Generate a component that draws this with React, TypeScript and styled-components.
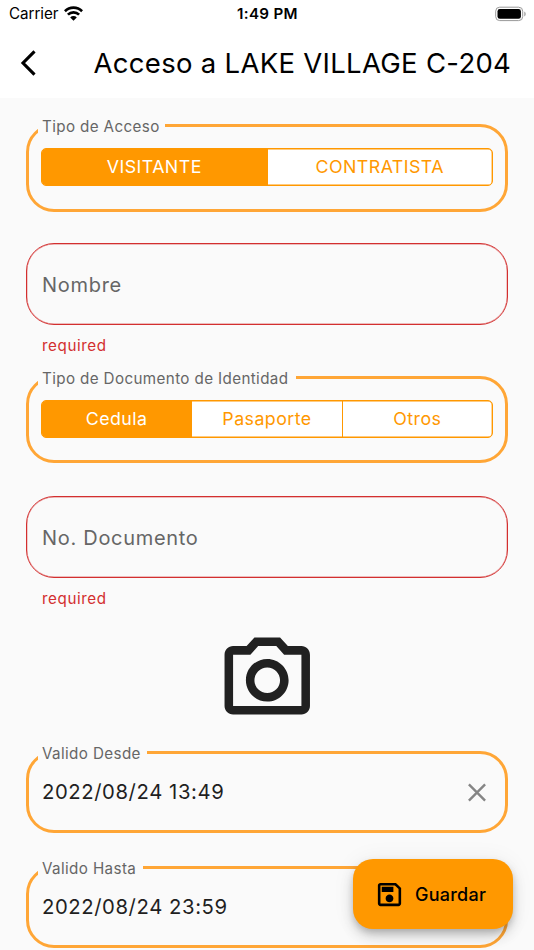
import React from "react";
import styled, { createGlobalStyle } from "styled-components";

const Global = createGlobalStyle`
  * { box-sizing: border-box; }
  html, body { margin: 0; height: 950px; overflow: hidden; background: #fafafa; }
  body { font-family: Inter, "Liberation Sans", sans-serif; color: #1f1f1f; }
`;

const Screen = styled.div`
  position: relative;
  width: 534px;
  height: 950px;
  overflow: hidden;
  background: #fafafa;
`;

const Header = styled.header`
  height: 98px;
  background: #fff;
  color: #000;
`;

const StatusBar = styled.div`
  display: grid;
  grid-template-columns: 1fr auto 1fr;
  align-items: center;
  height: 28px;
  padding: 0 8px 0 9px;
`;

const Carrier = styled.div`
  display: flex;
  align-items: center;
  gap: 6px;
  font-size: 15.2px;
  line-height: 20px;
  letter-spacing: -0.05px;
`;

const Clock = styled.div`
  font-size: 15.2px;
  line-height: 20px;
  font-weight: 600;
  letter-spacing: 0.3px;
`;

const Wifi = styled.svg`
  display: block;
  margin-bottom: 2px;
`;

const Battery = styled.svg`
  justify-self: end;
  display: block;
  margin-bottom: 1px;
`;

const TitleBar = styled.div`
  display: flex;
  align-items: center;
  height: 69px;
  padding-left: 20px;
`;

const Title = styled.h1`
  margin: 0 0 0 56.5px;
  font-size: 27.5px;
  line-height: 36px;
  font-weight: 400;
  letter-spacing: 0.3px;
  white-space: nowrap;
`;

const Form = styled.main`
  display: flex;
  flex-direction: column;
  padding: 26px 26px 0;
`;

const Field = styled.section<{ $height: number; $after: number; $error?: boolean }>`
  position: relative;
  flex: none;
  display: flex;
  align-items: center;
  height: ${(p) => p.$height}px;
  margin-bottom: ${(p) => p.$after}px;
  padding: 0 ${(p) => (p.$error ? 15 : 12)}px;
  border: ${(p) => (p.$error ? "1px solid #d32f2f" : "3px solid #ffa636")};
  border-radius: 28px;
  box-shadow: ${(p) => (p.$error ? "inset 0 0 0 0.4px rgba(211, 47, 47, 0.6)" : "none")};
`;

const Legend = styled.span<{ $width: number }>`
  position: absolute;
  top: -9px;
  left: 9px;
  width: ${(p) => p.$width}px;
  padding-left: 4px;
  background: #fafafa;
  color: #666;
  font-size: 15.2px;
  line-height: 18px;
  letter-spacing: 0.38px;
  white-space: nowrap;
`;

const Placeholder = styled.span`
  padding-top: 1px;
  color: #666;
  font-size: 20px;
  line-height: 26px;
  letter-spacing: 0.7px;
`;

const ErrorText = styled.p<{ $after: number }>`
  margin: 0 0 ${(p) => p.$after}px 16px;
  color: #d32f2f;
  font-size: 15.2px;
  line-height: 20px;
  letter-spacing: 0.6px;
`;

const Segments = styled.div`
  display: flex;
  flex: 1;
  height: 38px;
  margin-bottom: 2px;
  overflow: hidden;
  border: 1px solid #ff9800;
  border-radius: 5px;
  background: #fff;
  box-shadow: inset 0 0 0 0.4px #ff9800;
`;

const Segment = styled.button<{ $active?: boolean }>`
  flex: 1 1 0;
  padding: 0;
  border: 0;
  background: ${(p) => (p.$active ? "#ff9800" : "transparent")};
  color: ${(p) => (p.$active ? "#fff" : "#ff9800")};
  font: 400 17.8px/34px Inter, "Liberation Sans", sans-serif;
  letter-spacing: 0.45px;
  & + & { border-left: 1px solid #ff9800; }
`;

const DateValue = styled.span`
  flex: 1;
  padding-left: 1px;
  font-size: 20.3px;
  line-height: 26px;
  letter-spacing: 0.58px;
`;

const ClearButton = styled.button`
  display: flex;
  margin-right: 4px;
  padding: 0;
  border: 0;
  background: none;
`;

const CameraRow = styled.div`
  display: flex;
  justify-content: center;
  height: 103px;
  margin-bottom: 19px;
`;

const SaveButton = styled.button`
  position: absolute;
  left: 353px;
  top: 859px;
  display: flex;
  align-items: center;
  width: 160px;
  height: 70px;
  padding: 0 0 0 21px;
  gap: 10px;
  border: 0;
  border-radius: 20px;
  background: #ff9800;
  color: #000;
  font: 500 18px/24px Inter, "Liberation Sans", sans-serif;
  letter-spacing: 0.25px;
  box-shadow: 0 4px 7px -1px rgba(0, 0, 0, 0.2), 0 8px 14px rgba(0, 0, 0, 0.14), 0 1px 24px rgba(0, 0, 0, 0.06);
`;

const SaveLabel = styled.span`
  padding-top: 1px;
`;

const ClearIcon = () => (
  <ClearButton aria-label="Clear">
    <svg width="24" height="24" viewBox="0 0 24 24" fill="none" stroke="#858585" strokeWidth="2.4">
      <path d="M3.9 4.4 20.1 20.6M20.1 4.4 3.9 20.6" />
    </svg>
  </ClearButton>
);

export default function App() {
  return (
    <Screen>
      <Global />
      <Header>
        <StatusBar>
          <Carrier>
            <span>Carrier</span>
            <Wifi width="19" height="15" viewBox="0 0 19 15" fill="none" stroke="#000" strokeWidth="2.7">
              <path d="M.9 5.2a12.3 12.3 0 0 1 17.2 0M3.9 8.6a8 8 0 0 1 11.2 0" />
              <path d="M6.2 11.4a4.7 4.7 0 0 1 6.6 0L9.5 14.8Z" fill="#000" stroke="none" />
            </Wifi>
          </Carrier>
          <Clock>1:49 PM</Clock>
          <Battery width="31" height="16" viewBox="0 0 31 16">
            <rect x=".7" y="1.2" width="27" height="13.4" rx="4" fill="none" stroke="#999" />
            <rect x="2.5" y="3" width="23.4" height="9.8" rx="2.4" fill="#000" />
            <path d="M29.3 5.6c1.8.8 1.8 4 0 4.8Z" fill="#999" />
          </Battery>
        </StatusBar>
        <TitleBar>
          <svg width="17" height="26" viewBox="0 0 17 26" fill="none" stroke="#000" strokeWidth="3.1">
            <path d="M14.5 1.4 3 13 14.5 24.6" />
          </svg>
          <Title>Acceso a LAKE VILLAGE C-204</Title>
        </TitleBar>
      </Header>

      <Form>
        <Field $height={88} $after={31}>
          <Legend $width={127}>Tipo de Acceso</Legend>
          <Segments>
            <Segment $active>VISITANTE</Segment>
            <Segment>CONTRATISTA</Segment>
          </Segments>
        </Field>

        <Field $height={82} $after={11} $error>
          <Placeholder>Nombre</Placeholder>
        </Field>
        <ErrorText $after={20}>required</ErrorText>

        <Field $height={87} $after={33}>
          <Legend $width={258}>Tipo de Documento de Identidad</Legend>
          <Segments>
            <Segment $active>Cedula</Segment>
            <Segment>Pasaporte</Segment>
            <Segment>Otros</Segment>
          </Segments>
        </Field>

        <Field $height={82} $after={11} $error>
          <Placeholder>No. Documento</Placeholder>
        </Field>
        <ErrorText $after={20}>required</ErrorText>

        <CameraRow>
          <svg width="102.5" height="102.5" viewBox="0 0 24 24" fill="#212121">
            <path d="M14.12 4l1.83 2H20v12H4V6h4.05l1.83-2h4.24M15 2H9L7.17 4H4c-1.1 0-2 .9-2 2v12c0 1.1.9 2 2 2h16c1.1 0 2-.9 2-2V6c0-1.1-.9-2-2-2h-3.17L15 2zm-3 7c1.65 0 3 1.35 3 3s-1.35 3-3 3-3-1.35-3-3 1.35-3 3-3m0-2c-2.76 0-5 2.24-5 5s2.24 5 5 5 5-2.24 5-5-2.24-5-5-5z" />
          </svg>
        </CameraRow>

        <Field $height={82} $after={33}>
          <Legend $width={109}>Valido Desde</Legend>
          <DateValue>2022/08/24 13:49</DateValue>
          <ClearIcon />
        </Field>

        <Field $height={82} $after={0}>
          <Legend $width={105}>Valido Hasta</Legend>
          <DateValue>2022/08/24 23:59</DateValue>
          <ClearIcon />
        </Field>
      </Form>

      <SaveButton>
        <svg width="31" height="31" viewBox="0 0 24 24" fill="#000">
          <path d="M17 3H5c-1.11 0-2 .9-2 2v14c0 1.1.89 2 2 2h14c1.1 0 2-.9 2-2V7l-4-4zm2 16H5V5h11.17L19 7.83V19zm-7-7c-1.66 0-3 1.34-3 3s1.34 3 3 3 3-1.34 3-3-1.34-3-3-3zM6 6h9v4H6z" />
        </svg>
        <SaveLabel>Guardar</SaveLabel>
      </SaveButton>
    </Screen>
  );
}
